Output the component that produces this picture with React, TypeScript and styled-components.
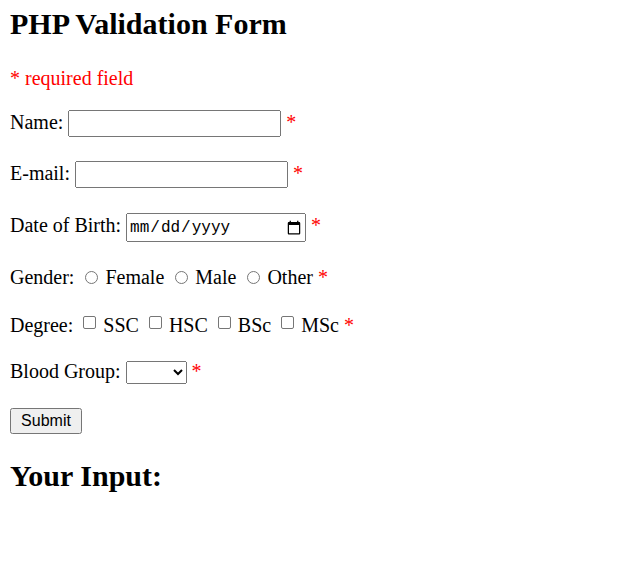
import React from 'react';
import styled, { createGlobalStyle } from 'styled-components';

const GlobalStyle = createGlobalStyle`
  html, body {
    margin: 0;
    padding: 0;
    background: #fff;
  }
  body {
    font-family: "Liberation Serif", "Times New Roman", serif;
    font-size: 20px;
    color: #000;
  }
`;

const Page = styled.div`
  padding: 7px 10px 0;
`;

const Heading = styled.h2<{ $mt: number }>`
  margin: ${p => p.$mt}px 0 0;
  font-size: 30px;
  font-weight: bold;
  line-height: 34px;
`;

const Note = styled.p`
  margin: 26px 0 0;
  line-height: 23px;
  color: #ff0000;
`;

const Row = styled.div<{ $mt: number }>`
  margin-top: ${p => p.$mt}px;
  line-height: 23px;
  white-space: nowrap;
`;

const TextField = styled.input<{ $w: number; $h: number }>`
  box-sizing: border-box;
  width: ${p => p.$w}px;
  height: ${p => p.$h}px;
  margin: 0;
  font-family: "Liberation Sans", Arial, sans-serif;
  font-size: 16px;
`;

const DateField = styled(TextField)`
  font-family: "Liberation Mono", "Courier New", monospace;

  &::-webkit-calendar-picker-indicator {
    width: 16px;
    height: 16px;
    margin-left: 4px;
    opacity: 1;
  }
`;

const Choice = styled.input<{ $round?: boolean }>`
  appearance: none;
  box-sizing: border-box;
  width: 13px;
  height: 13px;
  margin: ${p => (p.$round ? '3px 2px 0 6px' : '3px 2px 3px 5px')};
  border: 1px solid #767676;
  border-radius: ${p => (p.$round ? '50%' : '2px')};
  background: #fff;

  &:checked {
    background: #0075ff;
    border-color: #0075ff;
  }
`;

const Select = styled.select`
  box-sizing: border-box;
  width: 61px;
  height: 23px;
  margin: 0;
  font-family: "Liberation Sans", Arial, sans-serif;
  font-size: 16px;
`;

const SubmitButton = styled.button`
  box-sizing: border-box;
  width: 72px;
  height: 26px;
  margin: 0;
  font-family: "Liberation Sans", Arial, sans-serif;
  font-size: 16px;
`;

const Star = styled.span`
  color: #ff0000;
`;

const genders = ['Female', 'Male', 'Other'];
const degrees = ['SSC', 'HSC', 'BSc', 'MSc'];
const groups = ['A+', 'A-', 'B+', 'B-', 'O+', 'O-', 'AB+', 'AB-'];

const App: React.FC = () => {
  return (
    <Page>
      <GlobalStyle />
      <Heading $mt={0}>PHP Validation Form</Heading>
      <Note>* required field</Note>
      <form onSubmit={e => e.preventDefault()}>
        <Row $mt={20}>
          Name: <TextField type="text" name="name" $w={213} $h={27} /> <Star>*</Star>
        </Row>
        <Row $mt={24}>
          E-mail: <TextField type="text" name="email" $w={213} $h={27} /> <Star>*</Star>
        </Row>
        <Row $mt={25}>
          Date of Birth: <DateField type="date" name="dob" $w={180} $h={29} /> <Star>*</Star>
        </Row>
        <Row $mt={24}>
          Gender:{' '}
          {genders.map(g => (
            <React.Fragment key={g}>
              <Choice type="radio" name="gender" value={g.toLowerCase()} $round /> {g}{' '}
            </React.Fragment>
          ))}
          <Star>*</Star>
        </Row>
        <Row $mt={24}>
          Degree:{' '}
          {degrees.map(d => (
            <React.Fragment key={d}>
              <Choice type="checkbox" name="degree[]" value={d} /> {d}{' '}
            </React.Fragment>
          ))}
          <Star>*</Star>
        </Row>
        <Row $mt={23}>
          Blood Group:{' '}
          <Select name="blood" defaultValue="">
            <option value=""></option>
            {groups.map(b => (
              <option key={b} value={b}>{b}</option>
            ))}
          </Select>{' '}
          <Star>*</Star>
        </Row>
        <Row $mt={24}>
          <SubmitButton type="submit">Submit</SubmitButton>
        </Row>
      </form>
      <Heading $mt={25}>Your Input:</Heading>
    </Page>
  );
};

export default App;
